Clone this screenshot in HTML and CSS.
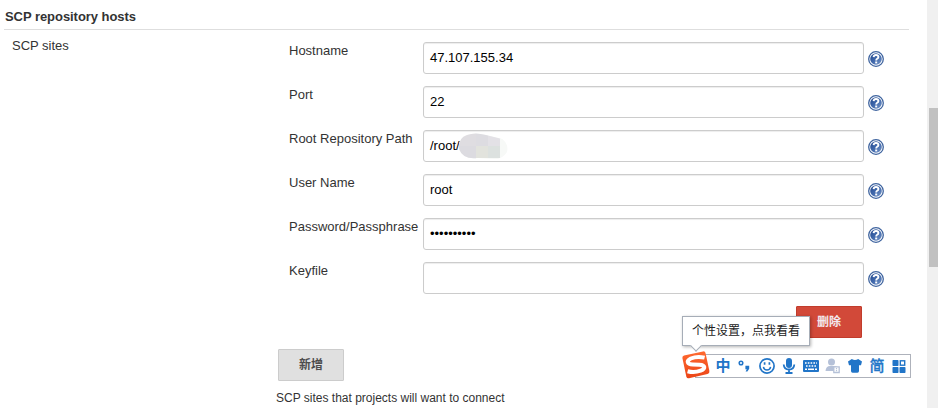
FILE: index.html
```html
<!DOCTYPE html>
<html lang="zh-CN">
<head>
<meta charset="utf-8">
<title>SCP repository hosts</title>
<link rel="stylesheet" href="styles.css">
</head>
<body>
<svg width="0" height="0" class="defs">
  <defs>
    <linearGradient id="blue" x1="0" y1="0" x2="1" y2="1"><stop offset="0" stop-color="#1f458c"/><stop offset=".5" stop-color="#4169ac"/><stop offset="1" stop-color="#7797c8"/></linearGradient>
    <symbol id="help" viewBox="0 0 16 16">
      <circle cx="8" cy="8" r="7.3" fill="#fff" stroke="#3f649f" stroke-width="1.3"/>
      <circle cx="8" cy="8" r="5.8" fill="url(#blue)"/>
      <path d="M5.6 6.1Q5.8 4 8 4Q10.4 4 10.4 6Q10.4 7.1 9.2 7.8Q8.2 8.4 8.2 9.4" fill="none" stroke="#fff" stroke-width="1.9"/>
      <rect x="7.2" y="10.5" width="2" height="1.9" fill="#fff"/>
    </symbol>
  </defs>
</svg>
<div class="window">
  <main class="page">
    <h2 class="section-title">SCP repository hosts</h2>
    <div class="section">
      <div class="section-label">SCP sites</div>
      <div class="sites">
        <div class="row"><label>Hostname</label><div class="field">47.107.155.34</div><svg class="help"><use href="#help"/></svg></div>
        <div class="row"><label>Port</label><div class="field">22</div><svg class="help"><use href="#help"/></svg></div>
        <div class="row"><label>Root Repository Path</label><div class="field">/root/<svg class="redaction" viewBox="0 0 50 28">
          <clipPath id="smudge"><path d="M1 16Q0 5 9 2Q17-1 28 2L44 6Q51 11 49 19Q46 24 40 26Q30 26 20 25Q5 27 1 16Z"/></clipPath>
          <g clip-path="url(#smudge)"><rect width="50" height="28" fill="#f7f9f7"/><rect width="18" height="13" fill="#dfdde1"/><rect y="13" width="18" height="15" fill="#dcdbe0"/><rect x="18" width="12" height="13" fill="#dddce1"/><rect x="18" y="13" width="12" height="12" fill="#e2e3dd"/><rect x="30" width="12" height="13" fill="#e3e1e6"/><rect x="30" y="13" width="12" height="12" fill="#dce1df"/><path d="M25 0L50 8V0Z" fill="#f0f2f1"/></g>
        </svg></div><svg class="help"><use href="#help"/></svg></div>
        <div class="row"><label>User Name</label><div class="field">root</div><svg class="help"><use href="#help"/></svg></div>
        <div class="row"><label>Password/Passphrase</label><div class="field password">••••••••••</div><svg class="help"><use href="#help"/></svg></div>
        <div class="row"><label>Keyfile</label><div class="field"></div><svg class="help"><use href="#help"/></svg></div>
        <div class="delete-row"><button class="button danger">删除</button></div>
        <button class="button add">新增</button>
        <p class="description">SCP sites that projects will want to connect</p>
      </div>
    </div>
  </main>
  <aside class="scrollbar"><div class="thumb"></div></aside>
</div>
<div class="ime">
  <svg class="ime-logo" viewBox="0 0 28 28">
    <defs><linearGradient id="orange" x1="0" y1="0" x2="0" y2="1"><stop offset="0" stop-color="#ff6a30"/><stop offset="1" stop-color="#eb4517"/></linearGradient></defs>
    <path d="M2 4.5L21 .4Q23 0 23.5 2L27.4 20Q27.8 22.4 25.5 23L7 27.3Q4.8 27.7 4.3 25.5L.4 7Q0 5 2 4.5Z" fill="url(#orange)"/>
    <path d="M22.6 6.6Q15 4.8 8.8 7.5C3.8 10 5.2 13.3 10.8 13.5L17.4 13.7C23.6 14 23.8 17.8 18.6 19.7Q12 22 5.6 20.2" fill="none" stroke="#fff" stroke-width="4"/>
  </svg>
  <span class="ime-item char bold">中</span>
  <svg class="ime-item" viewBox="0 0 16 16"><circle cx="4" cy="5" r="1.8" fill="none" stroke="#2175c8" stroke-width="1.5"/><path d="M8.4 7.7h3.8v3L10.4 13.6H8.6l1.2-2.4H8.4Z" fill="#2175c8"/></svg>
  <svg class="ime-item" viewBox="0 0 16 16" fill="none" stroke="#2175c8" stroke-width="1.7"><circle cx="8" cy="8" r="7.1"/><path d="M4.4 8.8Q5 12 8 12T11.6 8.8" stroke-width="1.5"/><path d="M5.6 4.3v2.4M10.4 4.3v2.4"/></svg>
  <svg class="ime-item" viewBox="0 0 16 16"><rect x="5" y="0" width="6" height="10" rx="3" fill="#2175c8"/><path d="M2.7 6.5Q3 11.5 8 11.5T13.3 6.5M8 11v4M4.5 15h7" fill="none" stroke="#2175c8" stroke-width="1.8"/></svg>
  <svg class="ime-item" viewBox="0 0 16 16"><rect y="2" width="16" height="12" rx="1" fill="#2175c8"/><path d="M2 5h12M3 8h10" stroke="#fff" stroke-width="1.6" stroke-dasharray="1.6 1.2"/><path d="M2 11.2h2M5 11.2h6M12 11.2h2" stroke="#fff" stroke-width="1.6"/></svg>
  <svg class="ime-item" viewBox="0 0 16 16"><circle cx="6.5" cy="4" r="3.5" fill="#b5c1d8"/><path d="M.5 13Q1 8 5 8h5q3 0 3 3v2Z" fill="#b5c1d8"/><path d="M8.8 8.8h5.4v5.7H8.8Z" fill="#fff" stroke="#b5c1d8" stroke-width="1.3"/><path d="M11.5 10v1.2M11.5 12v1.2" stroke="#b5c1d8" stroke-width="1.2"/></svg>
  <svg class="ime-item" viewBox="0 0 16 16"><path d="M4.8 1Q8 3.2 11.2 1L15 3.4 14 7.3H12V13Q12 14.7 10.4 14.7H5.6Q4 14.7 4 13V7.3H2L1 3.4Z" fill="#2175c8"/></svg>
  <span class="ime-item char">简</span>
  <svg class="ime-item" viewBox="0 0 16 16" fill="#2175c8"><rect x="1.5" y="2" width="6" height="6" rx=".7"/><rect x="1.5" y="9" width="6" height="6" rx=".7"/><rect x="8.5" y="9" width="6" height="6" rx=".7"/><rect x="9.3" y="2.8" width="4.4" height="4.4" fill="none" stroke="#2175c8" stroke-width="1.4"/></svg>
</div>
<div class="tooltip">个性设置，点我看看</div>
</body>
</html>
```
FILE: styles.css
```css
* { box-sizing: border-box; }
body {
  margin: 0;
  height: 408px;
  overflow: hidden;
  background: #fff;
  color: #333;
  font: 13px/18px "Liberation Sans", "Noto Sans CJK SC", sans-serif;
}
.defs { position: absolute; }
.window { display: flex; height: 408px; }
.page { flex: 1; padding: 0 18px 0 4px; }
.section-title {
  height: 30px;
  margin: 0;
  padding: 8px 0 0 1px;
  border-bottom: 1px solid #dedede;
  font-size: 13px;
  line-height: 18px;
  letter-spacing: -.05px;
}
.section { display: flex; }
.section-label { width: 272px; padding: 7px 0 0 8px; }
.sites { width: 613px; padding-top: 12px; }
.row { display: flex; height: 44px; }
.row label { width: 147px; padding-left: 13px; white-space: nowrap; }
.field {
  display: flex;
  width: 441px;
  height: 32px;
  padding: 6px;
  border: 1px solid #ccc;
  border-radius: 3px;
  box-shadow: inset 0 1px 1px rgba(0, 0, 0, .075);
  color: #000;
}
.redaction { flex: none; width: 50px; height: 28px; margin: -4px 0 0 -2px; }
.help { width: 16px; height: 16px; margin: 9px 0 0 4px; }
.delete-row { display: flex; justify-content: flex-end; padding-right: 27px; }
.button {
  display: block;
  width: 66px;
  height: 32px;
  padding: 0;
  border: 1px solid #ccc;
  border-radius: 1px;
  background: #e0e0e0;
  color: #4d4d4d;
  font: bold 12px/18px "Liberation Sans", "Noto Sans CJK SC", sans-serif;
}
.danger { border-color: #c13c2c; background: #d24939; color: #f3e9ed; }
.add { margin: 11px 0 0 2px; }
.description { margin: 8px 0 0; font-size: 12px; }
.scrollbar { width: 11px; padding: 108px 0 0 2px; background: #f0f0f0; }
.thumb { height: 159px; background: #c1c1c1; }
.ime {
  position: absolute;
  left: 695px;
  top: 354px;
  display: flex;
  align-items: center;
  gap: 6px;
  width: 216px;
  height: 24px;
  padding-left: 19px;
  border: 1px solid #aeb2bb;
  background: #fff;
  color: #2175c8;
}
.ime-logo { position: absolute; left: -14px; top: -4px; width: 28px; height: 28px; }
.ime-item { flex: none; width: 16px; height: 16px; }
.char { font: 500 15px/14px "Noto Sans CJK SC", sans-serif; text-align: center; -webkit-text-stroke: .3px #2175c8; }
.bold { font-weight: bold; -webkit-text-stroke: 0; }
.tooltip {
  position: absolute;
  left: 682px;
  top: 316px;
  width: 128px;
  height: 30px;
  padding-left: 9px;
  border: 1px solid #a6adb7;
  background: #fff;
  box-shadow: 1px 1px 3px rgba(0, 0, 0, .3);
  color: #222;
  font: 12px/26px "Noto Sans CJK SC", sans-serif;
}
.tooltip::after {
  content: "";
  position: absolute;
  left: 9px;
  top: 25px;
  width: 7px;
  height: 7px;
  border: solid #a6adb7;
  border-width: 0 1px 1px 0;
  background: #fff;
  transform: rotate(45deg);
}
```
